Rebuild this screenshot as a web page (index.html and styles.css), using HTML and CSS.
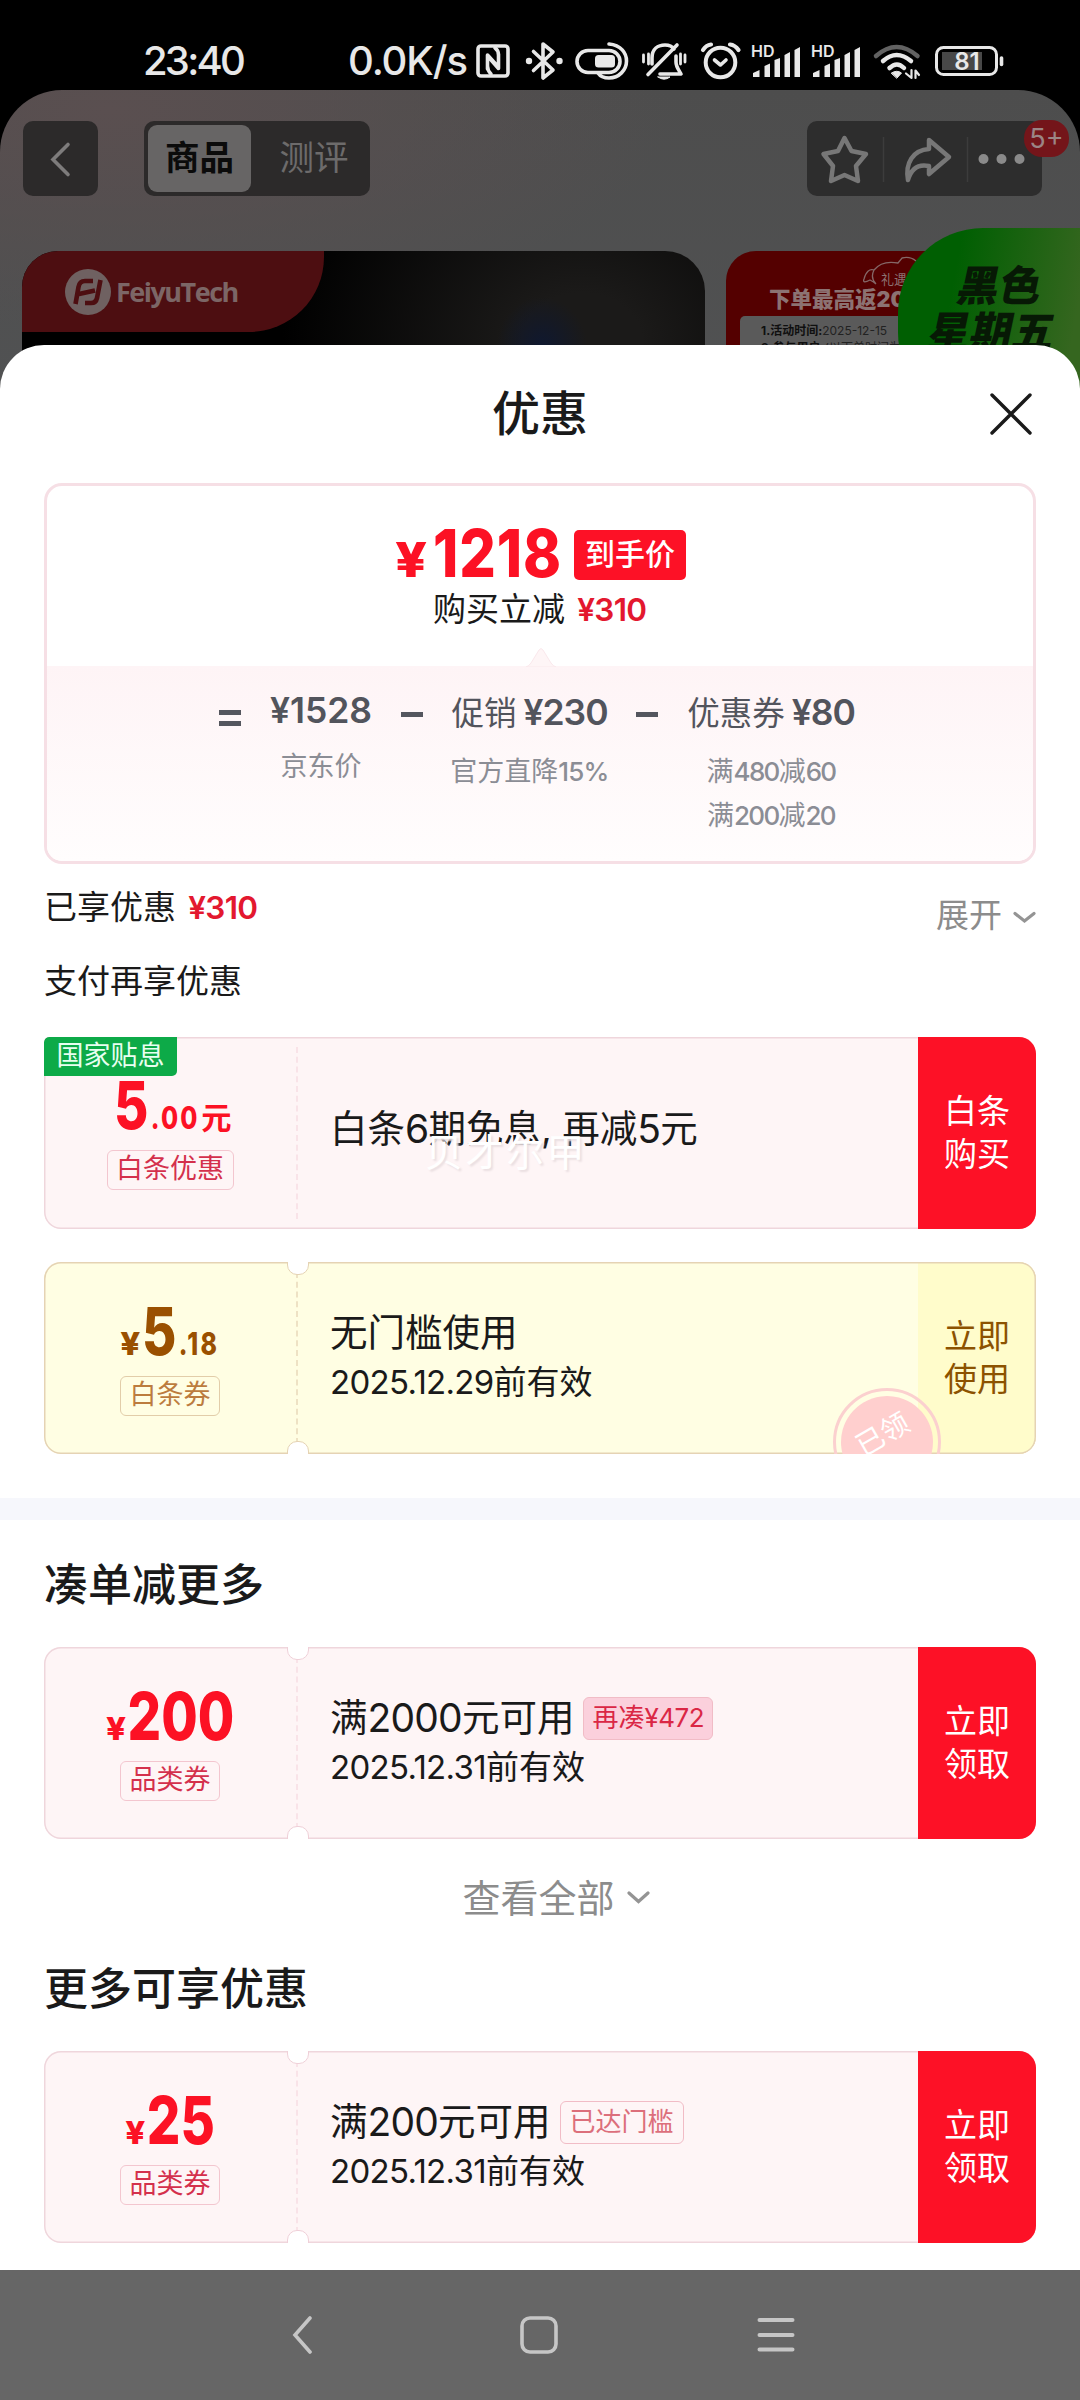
FILE: index.html
```html
<!DOCTYPE html>
<html lang="zh-CN">
<head>
<meta charset="utf-8">
<title>优惠</title>
<link rel="stylesheet" href="styles.css">
</head>
<body>
<div class="phone">
  <header class="status">
    <span class="clock">23:40</span>
    <span class="speed">0.0K/s</span>
    <svg class="status-icons" width="540" height="60" viewBox="470 30 540 60" fill="none" stroke="#e8e8e8" stroke-width="3.6" stroke-linecap="round" stroke-linejoin="round">
      <rect x="478" y="45" width="30" height="30" rx="3"/>
      <path d="M487.500 68V54L497 64.500M491 73C488 70 487.500 68 487.500 65M498.500 53V67.500L488.500 56M495 47C498 49 498.500 51 498.500 54"/>
      <path d="M533.500 50.500L553 69L543 77V43L553 51L533.500 69.500"/>
      <g fill="#e8e8e8" stroke="none"><circle cx="529" cy="60" r="3.200"/><circle cx="559.500" cy="60" r="3.200"/></g>
      <rect x="577" y="49.500" width="43" height="22" rx="11"/>
      <rect x="595" y="54" width="20" height="12.500" rx="3.500" fill="#e8e8e8" stroke="none"/>
      <path d="M609 43C621 44 626.500 52 626.500 60C626.500 69 619 77 609 77C604 77 600 75 598 72"/>
      <path d="M652 63V57C652 48 658 44 665 44C669 44 672 45 674 48M676 55V61C676 66 679 69 681 73H660M648 73.500L677 44"/>
      <path d="M658 76H670Q664 80.500 658 76Z" fill="#e8e8e8" stroke-width="1"/>
      <path d="M643.500 54V61M648.500 53V63M680.500 53V63M685 54V61" stroke-width="2.800"/>
      <circle cx="720.500" cy="61.500" r="14.800" stroke-width="4"/>
      <path d="M714.500 59L720.500 64L726 59"/>
      <path d="M703 49Q706 44 711 43.500M730 43.500Q735 44 738.500 49" stroke-width="4.200"/>
      <g id="bars" fill="#e8e8e8" stroke="none">
        <path d="M753 76V72L759.500 69V76ZM764.500 76V65L770 62.500V76ZM774.500 76V59L780 57V76ZM784.500 76V54L790 51V76ZM794.500 76V49L800 46V76Z"/>
      </g>
      <use href="#bars" x="60"/>
      <g class="hd"><text x="751" y="56">HD</text><text x="811" y="56">HD</text></g>
      <path d="M876 55Q896.500 37 917.500 55" stroke="#626262" stroke-width="4.500"/>
      <path d="M883 60Q896.500 48 911 60M889.500 67Q897 60 904 67" stroke-width="4.500"/>
      <path d="M891.500 72Q897 68.500 901.500 72L897 77Z" fill="#e8e8e8" stroke-width="1"/>
      <path d="M911.500 69V77L906 72.500M915.500 77V69.500L919 74" stroke-width="2.200"/>
      <rect x="942" y="51" width="40" height="18" fill="#484848" stroke="none"/>
      <rect x="936.500" y="46.500" width="60" height="27" rx="7" stroke-width="3"/>
      <path d="M1001.500 57V63.500"/>
      <text class="level" x="967" y="68.500" text-anchor="middle">81</text>
    </svg>
  </header>

  <section class="backdrop">
    <nav class="topnav">
      <div class="square">
        <svg width="75" height="75" viewBox="0 0 75 75" fill="none" stroke="#7e7c7c" stroke-width="3.600" stroke-linecap="round"><path d="M45 23.500L30 38.500L45 53.500"/></svg>
      </div>
      <div class="segment"><span class="seg on">商品</span><span class="seg">测评</span></div>
      <div class="tools">
        <svg width="235" height="75" viewBox="807 121 235 75" fill="none" stroke="#777" stroke-width="4.500" stroke-linejoin="round">
          <path d="M844.500 138L851.500 151L866 154L856 166L858 181L844.500 175L831 181L833 166L823.500 154L838 151Z"/>
          <path d="M929 140L949 157L929 174V166C915 163 910 173 908 180C905 163 913 150 929 149Z"/>
          <path d="M883.500 137V182M967.500 137V182" stroke="#3c3c3c" stroke-width="1.500"/>
          <g fill="#8a8a8a" stroke="none"><circle cx="983.500" cy="159" r="5"/><circle cx="1001.500" cy="159" r="5"/><circle cx="1019.500" cy="159" r="5"/></g>
        </svg>
        <span class="count">5+</span>
      </div>
    </nav>
    <div class="banners">
      <div class="hero">
        <div class="brand">
          <svg width="46" height="46" viewBox="0 0 46 46"><circle cx="23" cy="23" r="23" fill="#6f6161"/><path d="M10.500 35L13.500 18Q14.500 12 20 12H28M14 25L30 21.500M35.500 11L32 29Q31 34 26 34H20" fill="none" stroke="#4d0e11" stroke-width="4.600"/></svg>
          <span>FeiyuTech</span>
        </div>
      </div>
      <div class="promo">
        <svg class="deer" width="64" height="32" viewBox="0 0 64 32" fill="none" stroke="#856767" stroke-width="1.300"><path d="M14 28Q8 22 12 14Q5 12 2 23Q0 28 8 24Q12 26 14 28M12 14Q20 4 36 7L40 2Q48 0 54 5L62 9"/></svg>
        <span class="gift">礼遇</span>
        <b>下单最高返2000元</b>
        <div class="rules"><p><i>1.活动时间:</i>2025-12-15 （限量100）</p><p><i>2.参与用户:</i>(以下单时间为准)</p></div>
      </div>
    </div>
    <div class="friday"><span class="black">黑色</span><span>星期五</span></div>
  </section>

  <main class="sheet">
    <div class="title">优惠
      <svg class="close" width="42" height="42" viewBox="0 0 42 42" stroke="#1a1a1a" stroke-width="3.400" stroke-linecap="round"><path d="M2 2L40 40M40 2L2 40"/></svg>
    </div>

    <section class="price">
      <div class="final">
        <div class="amount"><small>¥</small>1218</div><span class="label">到手价</span>
      </div>
      <div class="saving">购买立减 <b>¥310</b></div>
      <div class="formula">
        <svg class="caret" width="30" height="20" viewBox="0 0 30 20"><path d="M0 20Q3 19 5 16L13 3Q15 0 17 3L25 16Q27 19 30 20Z" fill="#fef5f6" stroke="#fae8ec"/></svg>
        <span class="op eq"></span>
        <div class="term t1"><p><b>¥1528</b></p><small>京东价</small></div>
        <span class="op m1"></span>
        <div class="term t2"><p>促销<b>¥230</b></p><small>官方直降<em>15%</em></small></div>
        <span class="op m2"></span>
        <div class="term t3"><p>优惠券<b>¥80</b></p><small>满<em>480</em>减<em>60</em></small><small>满<em>200</em>减<em>20</em></small></div>
      </div>
    </section>

    <div class="line enjoyed"><span>已享优惠 <b>¥310</b></span>
      <span class="expand">展开<svg width="23" height="13" viewBox="0 0 23 13" fill="none" stroke="#949494" stroke-width="3.200" stroke-linecap="round"><path d="M2 2.500L11.500 10L21 2.500"/></svg></span>
    </div>
    <div class="line pay">支付再享优惠</div>

    <article class="coupon flat">
      <span class="state">国家贴息</span>
      <div class="worth first"><div class="value"><b>5</b><i>.00</i><i class="yuan">元</i></div><span class="kind">白条优惠</span></div>
      <div class="info"><h3>白条<u>6</u>期免息, 再减<u>5</u>元</h3></div>
      <div class="go"><span>白条</span><span>购买</span></div>
      <span class="toast">贝才尔甲</span>
    </article>

    <article class="coupon gold">
      <div class="worth"><div class="value"><i class="yen">¥</i><b>5</b><i>.18</i></div><span class="kind">白条券</span></div>
      <div class="info"><h3>无门槛使用</h3><p><u>2025.12.29</u>前有效</p></div>
      <div class="go"><span>立即</span><span>使用</span></div>
      <span class="stamp"><span>已领</span></span>
    </article>

    <div class="divider"></div>

    <h2 class="more">凑单减更多</h2>
    <article class="coupon">
      <div class="worth"><div class="value"><i class="yen">¥</i><b>200</b></div><span class="kind">品类券</span></div>
      <div class="info"><h3>满<u>2000</u>元可用<span class="hint full">再凑<s>¥472</s></span></h3><p><u>2025.12.31</u>前有效</p></div>
      <div class="go"><span>立即</span><span>领取</span></div>
    </article>

    <div class="all">查看全部<svg width="23" height="13" viewBox="0 0 23 13" fill="none" stroke="#949494" stroke-width="3.200" stroke-linecap="round"><path d="M2 2L11.500 10.500L21 2"/></svg></div>

    <h2 class="extra">更多可享优惠</h2>
    <article class="coupon">
      <div class="worth"><div class="value"><i class="yen">¥</i><b>25</b></div><span class="kind">品类券</span></div>
      <div class="info"><h3>满<u>200</u>元可用<span class="hint">已达门槛</span></h3><p><u>2025.12.31</u>前有效</p></div>
      <div class="go"><span>立即</span><span>领取</span></div>
    </article>
  </main>

  <footer class="navbar">
    <svg width="20" height="38" viewBox="0 0 20 38" fill="none" stroke="#c6c6c6" stroke-width="3.600" stroke-linecap="round"><path d="M18 2L3 19L18 36"/></svg>
    <svg width="38" height="38" viewBox="0 0 38 38" fill="none" stroke="#c6c6c6" stroke-width="3.600"><rect x="2" y="2" width="34" height="34" rx="8"/></svg>
    <svg width="38" height="38" viewBox="0 0 38 38" stroke="#c6c6c6" stroke-width="4" stroke-linecap="round"><path d="M2.500 4H35.500M2.500 19H35.500M2.500 33.500H35.500"/></svg>
  </footer>
</div>
</body>
</html>
```
FILE: styles.css
```css
* { box-sizing: border-box; margin: 0; padding: 0; }
body {
  width: 1080px;
  background: #000;
  color: #1a1a1a;
  font-family: Inter, "Noto Sans CJK SC", sans-serif;
}
i, em { font-style: normal; }
u, s { text-decoration: none; }
svg { display: block; flex: none; }
.phone { width: 1080px; height: 2400px; overflow: hidden; display: flex; flex-direction: column; }

.status { height: 90px; flex: none; display: flex; align-items: center; padding: 31px 0 0 143px; color: #e8e8e8; font-size: 40px; font-weight: 500; line-height: 60px; background: #000; }
.clock { width: 205px; letter-spacing: -2.8px; }
.speed { width: 122px; letter-spacing: -1.1px; white-space: nowrap; }
.status-icons text { fill: #e8e8e8; stroke: none; }
.hd text { font-size: 16px; font-weight: 600; }
.level { font-size: 24px; font-weight: 600; }

.backdrop {
  position: relative;
  flex: none;
  height: 315px;
  border-radius: 62px 62px 0 0;
  background: radial-gradient(ellipse 560px 220px at 110px 20px, #5a4f50, transparent), linear-gradient(#4d4d4d, #515253);
}
.topnav { display: flex; padding: 31px 0 0 23px; height: 161px; }
.square { width: 75px; height: 75px; border-radius: 10px; background: #2c2a2a; }
.segment { display: flex; margin-left: 46px; width: 226px; height: 75px; padding: 4px; border-radius: 10px; background: #2c2a2a; font-size: 34.500px; line-height: 66px; color: #6d6b6b; }
.seg { flex: none; width: 103px; text-align: center; height: 67px; }
.seg + .seg { width: 126px; }
.seg.on { border-radius: 9px; background: #676565; color: #0b0b0b; font-weight: 700; }
.tools { position: relative; margin-left: 437px; width: 235px; height: 75px; border-radius: 10px; background: #2d2d2d; }
.count { position: absolute; left: 217px; top: -1px; width: 45px; height: 37px; border-radius: 18px; background: #74151a; color: #9b8585; font-size: 27px; line-height: 37px; text-align: center; }
.banners { display: flex; gap: 21px; padding-left: 22px; height: 154px; }
.hero { width: 683px; border-radius: 36px 40px 0 0; overflow: hidden; background: radial-gradient(ellipse 45px 50px at 520px 96px, #0f1830, transparent), radial-gradient(ellipse 300px 240px at 560px 90px, #1b1a19 20%, transparent), #000; }
.brand { display: flex; align-items: center; gap: 5px; width: 302px; height: 81px; padding-left: 43px; border-radius: 0 0 75px 0; background: #4d0e11; color: #7c6666; font: 700 27px/44px "Open Sans", sans-serif; letter-spacing: -1.500px; }
.promo { position: relative; width: 354px; border-radius: 30px 0 0 0; background: #540000; padding: 33px 0 0 14px; }
.promo b { display: block; margin: 0 0 0 29px; font-size: 21.500px; font-weight: 900; line-height: 30px; color: #8c7272; }
.deer { position: absolute; left: 136px; top: 5px; }
.gift { position: absolute; left: 155px; top: 18px; font-size: 13px; line-height: 20px; color: #8c7272; }
.rules { margin-top: 2px; height: 120px; padding: 6px 0 0 21px; border-radius: 5px 0 0 0; background: #5a5a5a; color: #222; font-size: 12px; line-height: 17px; white-space: nowrap; }
.rules i { font-weight: 700; color: #0f0f0f; }
.friday { position: absolute; left: 898px; top: 138px; width: 182px; height: 190px; border-radius: 85px 0 0 85px; background: linear-gradient(100deg, #005f02 30%, #35661f 90%); color: #071905; font-size: 42px; font-weight: 900; line-height: 46px; text-align: center; padding: 35px 0 0 6px; }
.friday span { display: block; transform: skewX(-12deg); }
.friday .black { padding-left: 16px; }

.sheet { position: relative; flex: none; height: 1925px; margin-top: -60px; border-radius: 44px 44px 0 0; background: #fff; }
.title { position: relative; height: 138px; text-align: center; font-size: 48px; font-weight: 500; line-height: 138px; }
.close { position: absolute; left: 990px; top: 48px; }

.price { margin: 0 44px; height: 381px; border: 3px solid #f6dfe5; border-radius: 18px; overflow: hidden; }
.final { display: flex; align-items: center; padding: 38px 0 0 348px; }
.amount { width: 179px; height: 66px; margin-bottom: -4px; white-space: nowrap; color: #fc1124; font-size: 66px; font-weight: 800; line-height: 58px; letter-spacing: 1px; transform: scaleX(.87); transform-origin: left; }
.amount small { display: inline-block; margin-right: 15px; font-size: 48px; transform: scaleX(1.33); transform-origin: left; }
.label { width: 112px; height: 50px; border-radius: 5px; background: #fd1126; color: #fff; font-size: 30px; font-weight: 500; line-height: 48px; text-align: center; }
.saving { padding-left: 386px; margin-top: -3px; height: 83px; font-size: 33px; line-height: 52px; }
.saving b, .enjoyed b { color: #e3182f; font-size: 31.500px; font-weight: 600; letter-spacing: -.7px; margin-left: 3px; }
.formula { position: relative; display: flex; height: 196px; background: linear-gradient(#fef4f6, #fffdfd); color: #52545c; }
.caret { position: absolute; left: 479px; top: -19px; }
.op { flex: none; width: 22px; height: 5px; margin-top: 46px; background: #54565e; }
.eq { height: 16px; margin: 44px 0 0 172px; border: solid #54565e; border-width: 5px 0; background: none; }
.term { flex: none; display: flex; flex-direction: column; align-items: center; white-space: nowrap; }
.term p { font-size: 32.5px; line-height: 49px; }
.term b { font-size: 35.5px; font-weight: 600; letter-spacing: -1px; margin-left: 7px; }
.term small { font-size: 27px; line-height: 44px; color: #8b8d95; }
.term em { font-weight: 500; font-size: 26px; letter-spacing: -.8px; }
.t1 { width: 160px; padding-top: 20px; }
.term.t1 b { margin: 0; letter-spacing: 0; }
.t1 small { line-height: 62px; }
.t2 { width: 213px; padding-top: 22px; }
.t2 small, .t3 small:nth-child(2) { margin-top: 12px; }
.t3 { width: 226px; padding-top: 22px; }
.t3 em { letter-spacing: -1.700px; }

.line { font-size: 33px; line-height: 50px; padding: 0 44px; }
.enjoyed { display: flex; justify-content: space-between; height: 74px; padding-top: 18px; }
.expand { display: flex; align-items: center; gap: 11px; height: 66px; color: #8c8c8c; }
.expand svg { margin-top: 5px; }
.pay { height: 99px; padding-top: 18px; }

.coupon { position: relative; display: flex; margin: 0 44px; width: 992px; height: 192px; border-radius: 17px; overflow: hidden; background: #fef5f6; box-shadow: inset 0 0 0 1.5px #efd6dc; }
.coupon::before { content: ""; position: absolute; left: 252px; top: 10px; bottom: 10px; border-left: 2px dashed #f9e3e8; }
.worth::before, .worth::after { content: ""; position: absolute; left: 243px; width: 20px; height: 22px; border: 1.5px solid #efd0d8; border-radius: 10px; background: #fff; }
.worth::before { top: -11px; }
.worth::after { bottom: -11px; }
.flat .worth::before, .flat .worth::after { display: none; }
.worth { width: 252px; display: flex; flex-direction: column; align-items: center; padding-top: 36px; color: #fc1124; }
.value { height: 66px; display: flex; align-items: baseline; transform: scaleX(.8); }
.value b { font-size: 66px; font-weight: 800; line-height: 66px; }
.value i { font-size: 31px; font-weight: 800; }
.value b + i { margin-left: 3px; letter-spacing: 2.700px; }
.value .yen { margin-right: 9px; transform: scaleX(1.4); transform-origin: left; }
.value .yuan { margin-left: 2px; font-weight: 700; transform: scaleX(1.22); transform-origin: left; }
.kind { height: 40px; margin-top: 12px; padding: 0 8.500px; border: 1.5px solid #f3c6cf; border-radius: 6px; color: #d4304c; font-size: 27px; line-height: 36px; }
.worth.first { padding-top: 35px; }
.info { width: 622px; padding: 44px 0 0 34px; white-space: nowrap; }
.info h3 { display: flex; align-items: center; font-size: 37.500px; font-weight: 400; line-height: 54px; }
.info h3 u { font-size: 39px; letter-spacing: -.8px; }
.info p { font-size: 33px; line-height: 50px; margin-top: -3px; }
.info p u { letter-spacing: -.7px; font-size: 33px; }
.flat h3 { margin-top: 21px; white-space: pre; }
.info .flat u { letter-spacing: 0; }
.go { width: 118px; display: flex; flex-direction: column; align-items: center; padding-top: 53px; background: #fd1126; color: #fff; font-size: 33px; line-height: 43px; }
.state { position: absolute; left: 0; top: 0; width: 133px; height: 39px; border-radius: 5px 0 5px 0; background: #0daa48; color: #e8fff0; font-size: 27px; line-height: 38px; text-align: center; }
.flat { border-top-left-radius: 5px; }
.toast { position: absolute; left: 381px; top: 90px; color: #fff; font-size: 38px; line-height: 50px; letter-spacing: 2.500px; text-shadow: 2px 2px 2px #eadfe1; }
.hint { height: 43px; margin-left: 9px; padding: 0 9px; border: 1.5px solid #f1bcc6; border-radius: 6px; color: #dc6f7b; font-size: 26px; line-height: 39px; }
.hint.full { background: #fbd0dc; color: #da2745; padding: 0 8px; }
.hint s { letter-spacing: -.5px; }
.gold { margin-top: 33px; background: #fffee3; box-shadow: inset 0 0 0 1.5px #e5d3b4; }
.gold::before { border-color: #eee2c4; }
.gold .worth { color: #9a5000; }
.gold .worth::before, .gold .worth::after { border-color: #e5d3b4; }
.gold .kind { color: #bc7c3e; border-color: #e2cda9; }
.gold .go { background: #fffccb; color: #8c5200; box-shadow: inset -1.5px 0 #e5d3b4, inset 0 1.5px #e5d3b4, inset 0 -1.5px #e5d3b4; border-radius: 0 17px 17px 0; }
.stamp { position: absolute; left: 789px; top: 126px; width: 108px; height: 108px; padding: 5px; border: 3px solid #fbd0cf; border-radius: 50%; }
.stamp span { display: block; height: 92px; border-radius: 50%; background: #ffcfce; color: #fff; font-size: 28px; line-height: 74px; text-align: center; transform: rotate(-30deg); }

.divider { height: 22px; margin: 44px 0; background: #f6f7fc; }
h2 { height: 83px; padding-left: 44px; font-size: 44px; font-weight: 500; line-height: 43px; }
.all { display: flex; align-items: center; justify-content: center; gap: 12px; height: 112px; padding-left: 32px; font-size: 38px; color: #8c8c8c; }
.all svg { margin-top: 4px; }
.extra { height: 100px; line-height: 77px; }

.navbar { position: relative; flex: none; height: 130px; padding: 46px 0 0 292px; display: flex; gap: 208px; background: #666; }
.navbar svg + svg + svg { margin-left: -9px; }
```
